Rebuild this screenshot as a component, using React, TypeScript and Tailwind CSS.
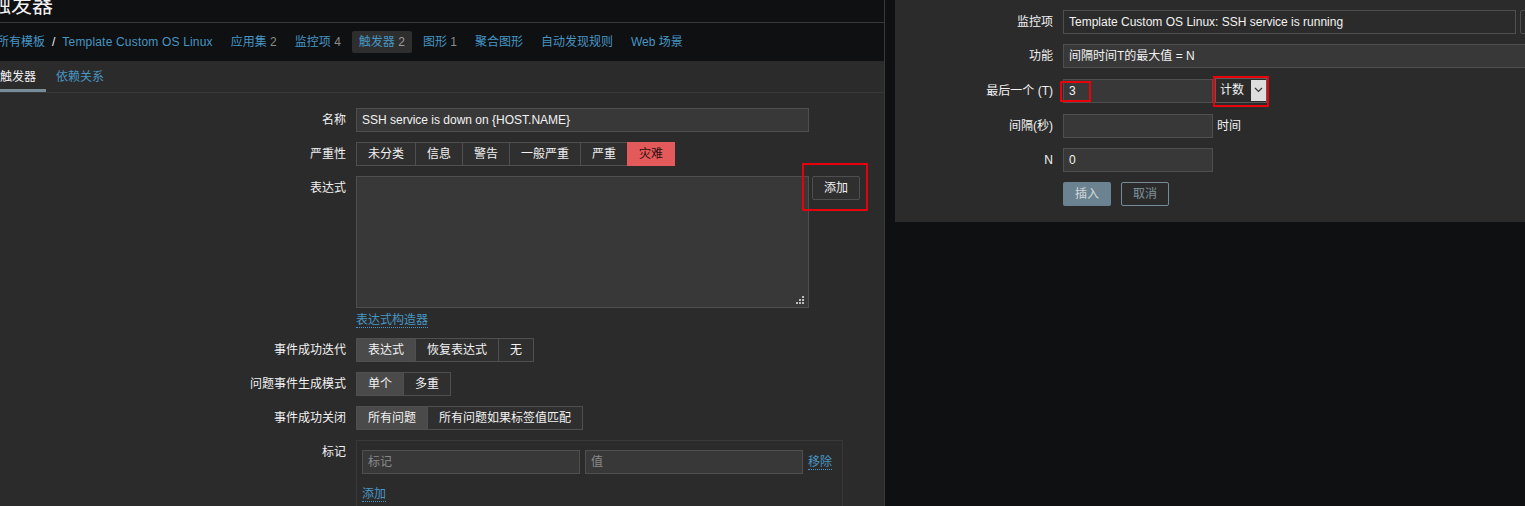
import React from "react";

const F = "font-['Liberation_Sans','Noto_Sans_CJK_SC',sans-serif]";

function Seg({ items, active, danger }: { items: string[]; active: number; danger?: boolean }) {
  return (
    <div className="flex">
      {items.map((t, i) => {
        const base = "h-[24px] px-[11px] leading-[22px] border whitespace-nowrap";
        const ml = i > 0 ? " -ml-px" : "";
        let c = " bg-[#2f2f2f] border-[#4f4f4f]";
        if (i === active) {
          c = danger ? " bg-[#e45959] border-[#e45959] text-[#2a1010] relative" : " bg-[#4a4a4a] border-[#4f4f4f]";
        }
        return (
          <div key={i} className={base + ml + c}>
            {t}
          </div>
        );
      })}
    </div>
  );
}

function Row({ label, children }: { label: string; children: React.ReactNode }) {
  return (
    <div className="flex">
      <div className="w-[346px] shrink-0 text-right leading-[24px] whitespace-nowrap">{label}</div>
      <div className="ml-[10px]">{children}</div>
    </div>
  );
}

function RRow({ label, children, tall }: { label: string; children: React.ReactNode; tall?: boolean }) {
  return (
    <div className={tall ? "flex items-center h-[26px] shrink-0" : "flex items-center h-[24px] shrink-0"}>
      <div className="w-[158px] shrink-0 text-right leading-[24px] whitespace-nowrap">{label}</div>
      <div className="ml-[10px] flex items-center shrink-0">{children}</div>
    </div>
  );
}

export default function App() {
  return (
    <div className={`w-[1525px] h-[506px] overflow-hidden bg-[#0e1012] flex text-[12px] text-[#f2f2f2] ${F}`}>
      {/* Left column */}
      <div className="w-[885px] shrink-0 h-full border-r border-[#3a3a3a] flex flex-col overflow-hidden">
        <div className="h-[23px] shrink-0 border-b border-[#383838] overflow-hidden">
          <div className="-mt-[6px] -ml-[10px] text-[21px] leading-[21px] whitespace-nowrap">触发器</div>
        </div>
        <div className="h-[38px] shrink-0 flex items-center gap-[4px] -ml-[10px] whitespace-nowrap">
          <div className="px-[7px] leading-[22px]">
            <span className="text-[#4796c4]">所有模板</span>
            <span className="mx-[7px]">/</span>
            <span className="text-[#4796c4] tracking-[0.18px]">Template Custom OS Linux</span>
          </div>
          <div className="px-[7px] leading-[22px]">
            <span className="text-[#4796c4]">应用集</span> <span className="text-[#8a8a8a]">2</span>
          </div>
          <div className="px-[7px] leading-[22px]">
            <span className="text-[#4796c4]">监控项</span> <span className="text-[#8a8a8a]">4</span>
          </div>
          <div className="px-[7px] leading-[22px] h-[22px] bg-[#2e2e2e] rounded-[2px]">
            <span className="text-[#4796c4]">触发器</span> <span className="text-[#9a9a9a]">2</span>
          </div>
          <div className="px-[7px] leading-[22px]">
            <span className="text-[#4796c4]">图形</span> <span className="text-[#8a8a8a]">1</span>
          </div>
          <div className="px-[7px] leading-[22px]">
            <span className="text-[#4796c4]">聚合图形</span>
          </div>
          <div className="px-[7px] leading-[22px]">
            <span className="text-[#4796c4]">自动发现规则</span>
          </div>
          <div className="px-[7px] leading-[22px]">
            <span className="text-[#4796c4]">Web 场景</span>
          </div>
        </div>
        <div className="h-[32px] shrink-0 bg-[#2b2b2b] border-b border-[#383838] flex -ml-[10px]">
          <div className="h-[31px] px-[10px] pt-[4px] border-b-[3px] border-[#768d99] flex items-center whitespace-nowrap">触发器</div>
          <div className="h-[31px] px-[10px] pt-[4px] border-b-[3px] border-transparent flex items-center text-[#4796c4] whitespace-nowrap">依赖关系</div>
        </div>

        {/* Form */}
        <div className="flex-1 bg-[#2b2b2b] pt-[15px] flex flex-col gap-[10px]">
          <Row label="名称">
            <div className="w-[453px] h-[24px] bg-[#383838] border border-[#4f4f4f] px-[5px] leading-[22px] whitespace-nowrap">
              SSH service is down on {"{HOST.NAME}"}
            </div>
          </Row>
          <Row label="严重性">
            <Seg items={["未分类", "信息", "警告", "一般严重", "严重", "灾难"]} active={5} danger />
          </Row>
          <Row label="表达式">
            <div className="flex items-start">
              <div className="flex flex-col">
                <div className="relative w-[453px] h-[132px] bg-[#383838] border border-[#4f4f4f]">
                  <svg className="absolute right-[3px] bottom-[2px]" width="9" height="9" viewBox="0 0 9 9">
                    <rect x="6" y="0" width="2" height="2" fill="#bdbdbd" />
                    <rect x="3" y="3" width="2" height="2" fill="#bdbdbd" />
                    <rect x="6" y="3" width="2" height="2" fill="#bdbdbd" />
                    <rect x="0" y="6" width="2" height="2" fill="#bdbdbd" />
                    <rect x="3" y="6" width="2" height="2" fill="#bdbdbd" />
                    <rect x="6" y="6" width="2" height="2" fill="#bdbdbd" />
                  </svg>
                </div>
                <div className="h-[20px] pt-[3px]">
                  <span className="inline-block leading-[14px] text-[#4796c4] border-b border-dotted border-[#4796c4]">表达式构造器</span>
                </div>
              </div>
              <div className="relative ml-[3px] w-[48px] h-[24px] bg-[#2f2f2f] border border-[#4f4f4f] rounded-[2px] flex items-center justify-center">
                添加
                <div className="absolute -left-[11px] -top-[14px] w-[66px] h-[48px] border-2 border-[#e8000b]" />
              </div>
            </div>
          </Row>
          <Row label="事件成功迭代">
            <Seg items={["表达式", "恢复表达式", "无"]} active={0} />
          </Row>
          <Row label="问题事件生成模式">
            <Seg items={["单个", "多重"]} active={0} />
          </Row>
          <Row label="事件成功关闭">
            <Seg items={["所有问题", "所有问题如果标签值匹配"]} active={0} />
          </Row>
          <Row label="标记">
            <div className="w-[487px] h-[90px] border border-[#383838] pl-[5px] pt-[9px]">
              <div className="flex items-center gap-[5px]">
                <div className="w-[218px] h-[24px] bg-[#383838] border border-[#4f4f4f] px-[5px] leading-[22px] text-[#8a8a8a]">标记</div>
                <div className="w-[218px] h-[24px] bg-[#383838] border border-[#4f4f4f] px-[5px] leading-[22px] text-[#8a8a8a]">值</div>
                <span className="inline-block leading-[14px] text-[#4796c4] border-b border-dotted border-[#4796c4]">移除</span>
              </div>
              <div className="mt-[11px]">
                <span className="inline-block leading-[14px] text-[#4796c4] border-b border-dotted border-[#4796c4]">添加</span>
              </div>
            </div>
          </Row>
        </div>
      </div>

      {/* Right dialog panel */}
      <div className="ml-[10px] w-[630px] h-[222px] shrink-0 bg-[#2b2b2b] overflow-hidden pt-[10px] flex flex-col gap-[10px]">
        <RRow label="监控项">
          <div className="w-[453px] h-[24px] shrink-0 border border-[#4f4f4f] px-[5px] leading-[22px] whitespace-nowrap">
            Template Custom OS Linux: SSH service is running
          </div>
          <div className="ml-[4px] w-[60px] h-[24px] shrink-0 border border-[#4f4f4f] rounded-[2px] bg-[#2b2b2b] leading-[22px] text-center">选择</div>
        </RRow>
        <RRow label="功能">
          <div className="w-[480px] h-[24px] shrink-0 bg-[#383838] border border-[#4f4f4f] px-[5px] leading-[22px] whitespace-nowrap">
            间隔时间T的最大值 = N
          </div>
        </RRow>
        <RRow label="最后一个 (T)" tall>
          <div className="relative w-[150px] h-[24px] shrink-0 bg-[#383838] border border-[#4f4f4f] px-[5px] leading-[22px]">
            3
            <div className="absolute -left-[4px] top-[1px] w-[31px] h-[21px] border-2 border-[#e8000b]" />
          </div>
          <div className="relative ml-[2px] -mt-[2px] w-[52px] h-[25px] shrink-0 bg-[#2b2b2b] border border-[#5a5a5a] flex items-stretch">
            <div className="flex-1 pl-[4px] leading-[23px]">计数</div>
            <div className="w-[15px] my-[1px] mr-[0px] bg-[#dedede] flex items-center justify-center">
              <svg width="9" height="6" viewBox="0 0 9 6">
                <path d="M1 1 L4.5 4.5 L8 1" stroke="#333" strokeWidth="1.2" fill="none" />
              </svg>
            </div>
            <div className="absolute -left-[3px] -top-[3px] w-[56px] h-[31px] border-2 border-[#e8000b]" />
          </div>
        </RRow>
        <RRow label="间隔(秒)">
          <div className="w-[150px] h-[24px] shrink-0 bg-[#383838] border border-[#4f4f4f]" />
          <div className="ml-[4px] whitespace-nowrap">时间</div>
        </RRow>
        <RRow label="N">
          <div className="w-[150px] h-[24px] shrink-0 bg-[#383838] border border-[#4f4f4f] px-[5px] leading-[22px]">0</div>
        </RRow>
        <div className="flex h-[24px] shrink-0">
          <div className="ml-[168px] w-[48px] h-[24px] bg-[#6b8390] text-[#d3dade] rounded-[2px] flex items-center justify-center">插入</div>
          <div className="ml-[10px] w-[48px] h-[24px] border border-[#768d99] text-[#7f959f] rounded-[2px] flex items-center justify-center">取消</div>
        </div>
      </div>
    </div>
  );
}
